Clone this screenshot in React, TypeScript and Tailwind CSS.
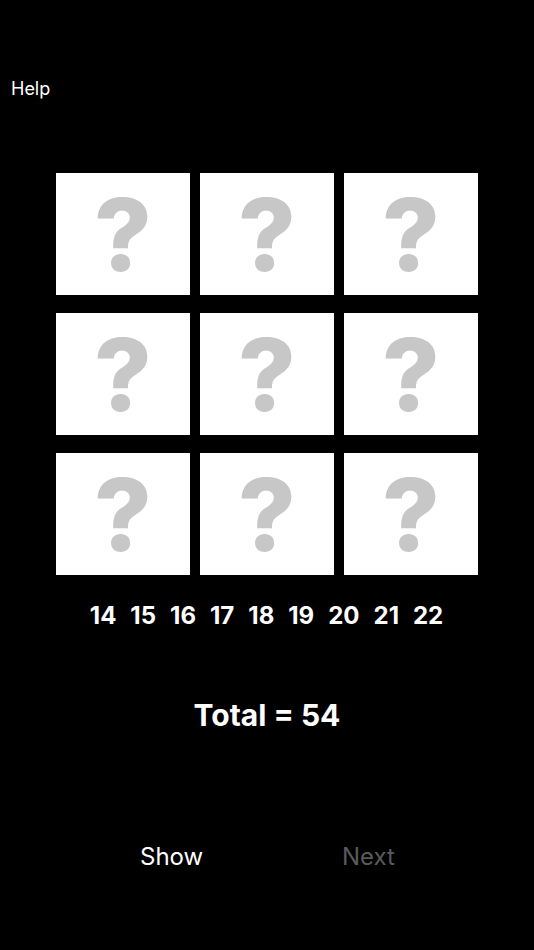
import React from "react";

const numbers = [14, 15, 16, 17, 18, 19, 20, 21, 22];

function Tile() {
  return (
    <div className="flex h-[122px] w-[134px] items-center justify-center bg-white">
      <span className="mt-[2px] text-[100px] font-extrabold leading-none text-[#c7c7c7]">?</span>
    </div>
  );
}

export default function App() {
  return (
    <main
      className="flex h-[950px] w-[534px] flex-col bg-black text-white"
      style={{ fontFamily: 'Inter, "Liberation Sans", Arial, sans-serif' }}
    >
      <div className="pl-[11px] pt-[78px] text-[18px] leading-[22px]">Help</div>

      {/* Grid of hidden tiles */}
      <div className="ml-[56px] mt-[73px] grid w-[422px] grid-cols-3 gap-x-[10px] gap-y-[18px]">
        {Array.from({ length: 9 }).map((_, i) => (
          <Tile key={i} />
        ))}
      </div>

      <div className="mt-[27px] flex justify-center gap-[14px] pr-[1px] text-[24px] font-bold leading-[28px]">
        {numbers.map((n) => (
          <span key={n}>{n}</span>
        ))}
      </div>

      <div className="mt-[68px] text-center text-[30px] font-bold leading-[34px]">Total = 54</div>

      <div className="mt-[111px] flex text-[24px] leading-[28px]">
        <div className="ml-[140px] w-[62px]">Show</div>
        <div className="ml-[140px] text-[#5a5a5a]">Next</div>
      </div>
    </main>
  );
}
